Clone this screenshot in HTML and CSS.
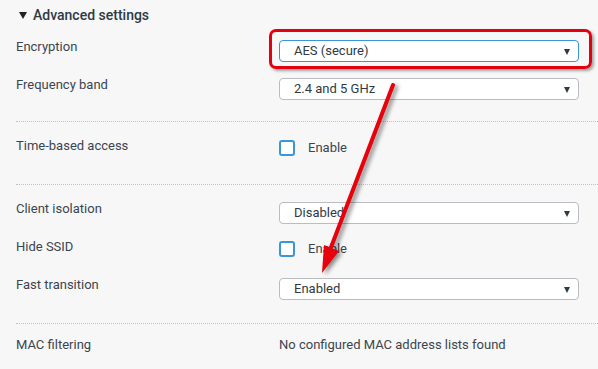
FILE: index.html
```html
<!DOCTYPE html>
<html lang="en">
<head>
    <meta charset="UTF-8">
    <meta name="viewport" content="width=device-width, initial-scale=1.0">
    <title>Advanced settings</title>
    <link rel="stylesheet" href="styles.css">
</head>
<body>

<div class="page">
    <div class="toggle"><span class="caret-down"></span>Advanced settings</div>

    <div class="section first">
        <div class="row">
            <div class="label">Encryption</div>
            <div class="select focus">AES (secure)</div>
        </div>
        <div class="row">
            <div class="label">Frequency band</div>
            <div class="select">2.4 and 5 GHz</div>
        </div>
    </div>

    <div class="section">
        <div class="row">
            <div class="label">Time-based access</div>
            <label class="check"><span class="box"></span>Enable</label>
        </div>
    </div>

    <div class="section">
        <div class="row">
            <div class="label">Client isolation</div>
            <div class="select">Disabled</div>
        </div>
        <div class="row">
            <div class="label">Hide SSID</div>
            <label class="check"><span class="box"></span>Enable</label>
        </div>
        <div class="row">
            <div class="label">Fast transition</div>
            <div class="select">Enabled</div>
        </div>
    </div>

    <div class="section last">
        <div class="row text-row">
            <div class="label">MAC filtering</div>
            <div class="value">No configured MAC address lists found</div>
        </div>
    </div>
</div>

<!-- annotation drawn over the screenshot -->
<div class="highlight"></div>
<svg class="arrow" width="598" height="369" viewBox="0 0 598 369">
    <g class="arrow-shape">
        <line x1="393" y1="85" x2="330" y2="250" stroke="#e8000b" stroke-width="4" stroke-linecap="round"/>
        <polygon points="322,273 339,251 324,245" fill="#e8000b"/>
    </g>
</svg>

</body>
</html>
```

FILE: styles.css
```css
body {
    margin: 0;
    background: #f7f7f7;
    font-family: Roboto, "Liberation Sans", sans-serif;
    font-size: 13px;
    color: #3b4550;
}
.page {
    padding-left: 16px;
}
.toggle {
    padding-top: 6px;
    height: 18px;
    line-height: 18px;
    font-size: 14px;
    font-weight: 500;
    color: #2f3a45;
    display: flex;
    align-items: center;
}
.caret-down {
    width: 0;
    height: 0;
    border-left: 4px solid transparent;
    border-right: 4px solid transparent;
    border-top: 7px solid #222;
    margin: 0 6px 0 3px;
}
.section {
    padding: 17px 0 23px;
    border-bottom: 1px dotted #c2c2c2;
    display: flex;
    flex-direction: column;
    gap: 16px;
}
.section.first {
    padding-top: 16px;
    padding-bottom: 21px;
}
.section.last {
    border-bottom: none;
    padding-top: 14px;
}
.row {
    display: grid;
    grid-template-columns: 263px 300px;
    align-items: start;
    height: 22px;
}
.text-row {
    height: 14px;
}
.label, .value {
    line-height: 14px;
}
.select {
    position: relative;
    box-sizing: border-box;
    height: 22px;
    line-height: 20px;
    padding-left: 14px;
    background: #fff;
    border: 1px solid #b9bcc0;
    border-radius: 4px;
    color: #2f3a45;
}
.select::after {
    content: "";
    position: absolute;
    right: 8px;
    top: 8px;
    border-left: 3px solid transparent;
    border-right: 3px solid transparent;
    border-top: 6px solid #2f3a45;
}
.select.focus {
    border-color: #3a96d6;
}
.check {
    display: flex;
    align-items: center;
    height: 16px;
    margin-top: 1px;
    line-height: 16px;
}
.check .box {
    flex: none;
}
.box {
    box-sizing: border-box;
    width: 16px;
    height: 16px;
    border: 2px solid #3a96d6;
    border-radius: 3px;
    background: #fff;
    margin-right: 13px;
    position: relative;
    top: 0;
}
.highlight {
    position: absolute;
    left: 269px;
    top: 29px;
    width: 323px;
    height: 40px;
    box-sizing: border-box;
    border: 3px solid #e3000f;
    border-radius: 7px;
    box-shadow: 2px 2px 3px rgba(0, 0, 0, 0.35);
}
.arrow {
    position: absolute;
    left: 0;
    top: 0;
}
.arrow-shape {
    filter: drop-shadow(3px 2px 2px rgba(0, 0, 0, 0.45));
}
```
